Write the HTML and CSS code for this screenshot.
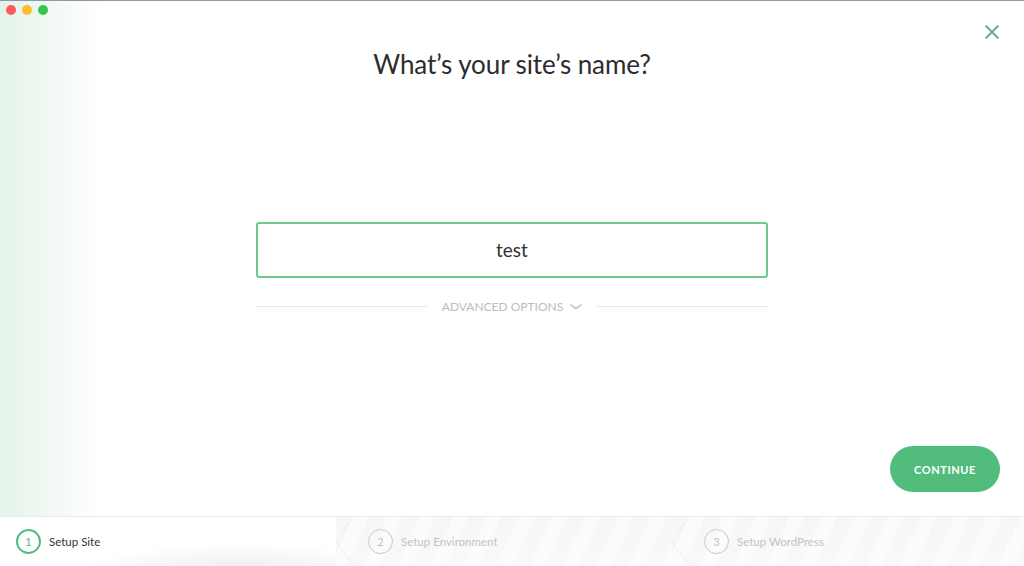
FILE: index.html
```html
<!DOCTYPE html>
<html>
<head>
<meta charset="utf-8">
<link rel="stylesheet" href="styles.css">
</head>
<body>
<div class="window">
  <div class="traffic">
    <span class="dot red"></span><span class="dot yellow"></span><span class="dot green"></span>
  </div>
  <button class="close" aria-label="Close">
    <svg width="16" height="16" viewBox="0 0 16 16"><path d="M1.5 1.5 L14.5 14.5 M14.5 1.5 L1.5 14.5" stroke="#51bb7b" stroke-width="1.8" fill="none"/></svg>
  </button>
  <main class="main">
    <h1 class="title">What’s your site’s name?</h1>
    <div class="form">
      <div class="field">test</div>
      <div class="advanced">
        <span class="rule"></span>
        <span class="adv-label">ADVANCED OPTIONS
          <svg width="12" height="6" viewBox="0 0 12 6"><path d="M1 1 L6 4.5 L11 1" stroke="#c4c4c4" stroke-width="1.6" fill="none" stroke-linecap="round"/></svg>
        </span>
        <span class="rule"></span>
      </div>
    </div>
    <div class="actions">
      <button class="continue">CONTINUE</button>
    </div>
  </main>
  <footer class="steps">
    <div class="step active"><span class="num">1</span><span class="label">Setup Site</span></div>
    <div class="step"><span class="num">2</span><span class="label">Setup Environment</span></div>
    <div class="step"><span class="num">3</span><span class="label">Setup WordPress</span></div>
  </footer>
</div>
</body>
</html>
```
FILE: styles.css
```css
* { box-sizing: border-box; }
html, body { margin: 0; padding: 0; }
body {
  width: 1024px;
  height: 566px;
  overflow: hidden;
  font-family: Lato, "Open Sans", sans-serif;
  background: #fff;
}
.window {
  position: relative;
  width: 1024px;
  height: 566px;
  display: flex;
  flex-direction: column;
  border-top: 1px solid #8e99a6;
  background: linear-gradient(to right, #e4f3e9 0px, #eef7f1 40px, #f9fcfa 75px, #ffffff 105px);
}
.traffic {
  position: absolute;
  left: 6px;
  top: 4px;
  display: flex;
  gap: 6px;
}
.dot { width: 10px; height: 10px; border-radius: 50%; display: block; }
.red { background: #fc5b57; }
.yellow { background: #fdbc2e; }
.green { background: #33c748; }
.close {
  position: absolute;
  right: 24px;
  top: 23px;
  border: 0;
  background: none;
  padding: 0;
  width: 16px;
  height: 16px;
}
.close svg { display: block; }
.main {
  flex: 1;
  display: flex;
  flex-direction: column;
  align-items: center;
}
.title {
  margin: 47px 0 0;
  font-size: 26px;
  font-weight: 400;
  color: #2d2d2d;
  line-height: 32px;
  letter-spacing: -0.1px;
}
.form {
  margin-top: 142px;
  width: 512px;
}
.field {
  height: 56px;
  border: 2px solid #6bcb8e;
  border-radius: 3px;
  display: flex;
  align-items: center;
  justify-content: center;
  font-size: 19px;
  color: #333;
  padding-bottom: 1px;
}
.advanced {
  margin-top: 21px;
  display: flex;
  align-items: center;
  gap: 15px;
}
.rule { flex: 1; height: 1px; background: #e8e8e8; }
.adv-label {
  font-size: 12px;
  color: #bdbdbd;
  letter-spacing: 0;
  display: flex;
  align-items: center;
  gap: 7px;
}
.adv-label svg { display: block; margin-top: 1px; }
.actions {
  margin-top: auto;
  align-self: flex-end;
  margin-right: 24px;
  margin-bottom: 24px;
}
.continue {
  width: 110px;
  height: 46px;
  border-radius: 23px;
  border: 0;
  background: #52bc7c;
  color: #fff;
  font-family: Lato, sans-serif;
  font-weight: 700;
  font-size: 11px;
  letter-spacing: 0.6px;
}
.steps {
  height: 50px;
  display: grid;
  grid-template-columns: 336px 336px 1fr;
  border-top: 1px solid #ececec;
  background: #fff;
}
.step {
  position: relative;
  display: flex;
  align-items: center;
  gap: 8px;
  padding-left: 16px;
  font-size: 11.5px;
  color: #c2c2c2;
  background:
    repeating-linear-gradient(115deg, rgba(255,255,255,0) 0 16px, rgba(255,255,255,0.55) 16px 30px),
    linear-gradient(to bottom, #f6f6f6, #f9f9f9);
}
.step.active {
  color: #333;
  background: radial-gradient(ellipse 160px 30px at 240px 56px, #ececec 0%, rgba(255,255,255,0) 100%), #fff;
}
.step + .step { padding-left: 32px; }
.step::after {
  content: "";
  position: absolute;
  right: -17px;
  top: 0;
  width: 17px;
  height: 100%;
  background: linear-gradient(to bottom right, transparent 49%, #e8e8e8 50%, transparent 53%) top / 100% 50% no-repeat,
              linear-gradient(to top right, transparent 49%, #e8e8e8 50%, transparent 53%) bottom / 100% 50% no-repeat;
  z-index: 2;
}
.step:last-child::after { display: none; }
.num {
  width: 25px;
  height: 25px;
  border-radius: 50%;
  border: 1.5px solid #c9c9c9;
  display: flex;
  align-items: center;
  justify-content: center;
  font-size: 11px;
  color: #c2c2c2;
}
.active .num { border: 2px solid #52bc7c; color: #52bc7c; }
```
